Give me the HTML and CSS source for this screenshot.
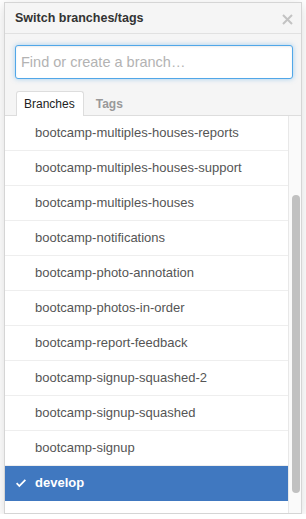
FILE: index.html
```html
<!DOCTYPE html>
<html lang="en">
<head>
    <meta charset="UTF-8">
    <meta name="viewport" content="width=device-width, initial-scale=1.0">
    <title>Switch branches/tags</title>
    <link rel="stylesheet" href="styles.css">
</head>
<body>
    <div class="select-menu">
        <div class="menu-header">
            <span class="menu-title">Switch branches/tags</span>
            <svg class="menu-close" width="11" height="11" viewBox="0 0 11 11">
                <path d="M1 1 L10 10 M10 1 L1 10" stroke="#c3c3c3" stroke-width="2" fill="none"/>
            </svg>
        </div>
        <div class="menu-filters">
            <input type="text" class="filter-input" placeholder="Find or create a branch…">
            <div class="menu-tabs">
                <span class="menu-tab selected">Branches</span>
                <span class="menu-tab">Tags</span>
            </div>
        </div>
        <div class="menu-body">
            <div class="branch-list">
                <div class="branch-item">bootcamp-multiples-houses-reports</div>
                <div class="branch-item">bootcamp-multiples-houses-support</div>
                <div class="branch-item">bootcamp-multiples-houses</div>
                <div class="branch-item">bootcamp-notifications</div>
                <div class="branch-item">bootcamp-photo-annotation</div>
                <div class="branch-item">bootcamp-photos-in-order</div>
                <div class="branch-item">bootcamp-report-feedback</div>
                <div class="branch-item">bootcamp-signup-squashed-2</div>
                <div class="branch-item">bootcamp-signup-squashed</div>
                <div class="branch-item">bootcamp-signup</div>
                <div class="branch-item current">
                    <svg class="check" width="10" height="14" viewBox="0 0 12 16">
                        <path d="M12 5l-8 8-4-4 1.5-1.5L4 10l6.5-6.5L12 5z" fill="#fff"/>
                    </svg>
                    develop
                </div>
                <div class="branch-item"></div>
            </div>
            <div class="scroll-track">
                <div class="scroll-thumb"></div>
            </div>
        </div>
    </div>
</body>
</html>
```

FILE: styles.css
```css
body {
    margin: 0;
    background: #fff;
    font-family: "Liberation Sans", Arial, sans-serif;
    color: #333;
}
.select-menu {
    margin: 2px 0 0 4px;
    width: 296px;
    height: 510px;
    border: 1px solid #d5d5d5;
    box-shadow: 0 3px 12px rgba(0, 0, 0, 0.15);
    background: #fff;
    overflow: hidden;
    display: flex;
    flex-direction: column;
}
.menu-header {
    height: 30px;
    flex-shrink: 0;
    background: #f5f5f5;
    border-bottom: 1px solid #e1e1e1;
    padding: 0 8px 0 10px;
    display: flex;
    align-items: center;
    justify-content: space-between;
}
.menu-title {
    font-size: 12.5px;
    font-weight: bold;
    color: #333;
}
.menu-close {
    display: block;
    margin-top: 2px;
}
.menu-filters {
    flex-shrink: 0;
    background: #f5f5f5;
    padding: 11px 8px 0 10px;
    border-bottom: 1px solid #ddd;
}
.filter-input {
    display: block;
    box-sizing: border-box;
    width: 278px;
    height: 34px;
    margin: 0;
    padding: 0 5px;
    border: 1px solid #51a7e8;
    border-radius: 3px;
    outline: none;
    font-family: "Liberation Sans", Arial, sans-serif;
    font-size: 14.5px;
    color: #333;
    background: #fff;
    box-shadow: inset 0 1px 2px rgba(0, 0, 0, 0.075), 0 0 5px rgba(81, 167, 232, 0.5);
}
.filter-input::placeholder {
    color: #b3b3b3;
}
.menu-tabs {
    display: flex;
    gap: 4px;
    margin: 12px 0 -1px 1px;
}
.menu-tab {
    display: block;
    height: 23px;
    line-height: 24px;
    padding: 0 8px 0 7px;
    border: 1px solid transparent;
    border-bottom: none;
    border-radius: 3px 3px 0 0;
    font-size: 12px;
    font-weight: bold;
    color: #999;
}
.menu-tab.selected {
    height: 24px;
    background: #fff;
    border-color: #ddd;
    color: #222;
    font-weight: normal;
}
.menu-body {
    flex: 1;
    display: flex;
    min-height: 0;
}
.branch-list {
    flex: 1;
    overflow: hidden;
}
.branch-item {
    height: 34px;
    line-height: 34px;
    border-bottom: 1px solid #eee;
    padding-left: 30px;
    font-size: 13px;
    color: #555;
    position: relative;
}
.branch-item.current {
    background: #4078c0;
    border-bottom-color: #4078c0;
    color: #fff;
    font-weight: bold;
}
.check {
    position: absolute;
    left: 11px;
    top: 10px;
}
.scroll-track {
    width: 12px;
    background: #fafafa;
    border-left: 1px solid #e8e8e8;
}
.scroll-thumb {
    width: 8px;
    height: 298px;
    margin: 79px 0 0 3px;
    border-radius: 4px;
    background: #c1c1c1;
}
```
